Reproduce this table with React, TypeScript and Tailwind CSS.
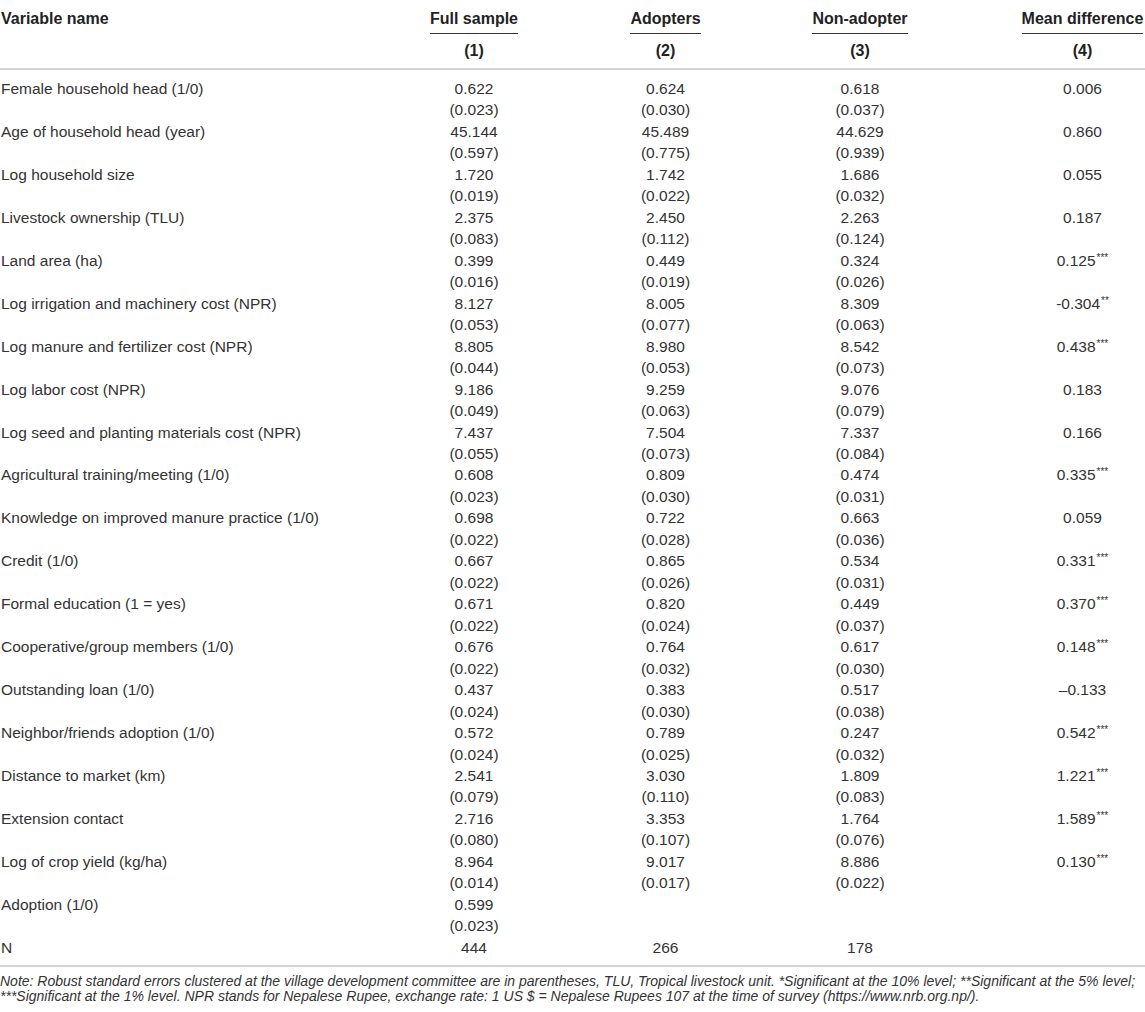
const rows: [string, string[], string[], string, string?][] = [
  ["Female household head (1/0)", ["0.622", "0.624", "0.618"], ["(0.023)", "(0.030)", "(0.037)"], "0.006"],
  ["Age of household head (year)", ["45.144", "45.489", "44.629"], ["(0.597)", "(0.775)", "(0.939)"], "0.860"],
  ["Log household size", ["1.720", "1.742", "1.686"], ["(0.019)", "(0.022)", "(0.032)"], "0.055"],
  ["Livestock ownership (TLU)", ["2.375", "2.450", "2.263"], ["(0.083)", "(0.112)", "(0.124)"], "0.187"],
  ["Land area (ha)", ["0.399", "0.449", "0.324"], ["(0.016)", "(0.019)", "(0.026)"], "0.125", "***"],
  ["Log irrigation and machinery cost (NPR)", ["8.127", "8.005", "8.309"], ["(0.053)", "(0.077)", "(0.063)"], "-0.304", "**"],
  ["Log manure and fertilizer cost (NPR)", ["8.805", "8.980", "8.542"], ["(0.044)", "(0.053)", "(0.073)"], "0.438", "***"],
  ["Log labor cost (NPR)", ["9.186", "9.259", "9.076"], ["(0.049)", "(0.063)", "(0.079)"], "0.183"],
  ["Log seed and planting materials cost (NPR)", ["7.437", "7.504", "7.337"], ["(0.055)", "(0.073)", "(0.084)"], "0.166"],
  ["Agricultural training/meeting (1/0)", ["0.608", "0.809", "0.474"], ["(0.023)", "(0.030)", "(0.031)"], "0.335", "***"],
  ["Knowledge on improved manure practice (1/0)", ["0.698", "0.722", "0.663"], ["(0.022)", "(0.028)", "(0.036)"], "0.059"],
  ["Credit (1/0)", ["0.667", "0.865", "0.534"], ["(0.022)", "(0.026)", "(0.031)"], "0.331", "***"],
  ["Formal education (1 = yes)", ["0.671", "0.820", "0.449"], ["(0.022)", "(0.024)", "(0.037)"], "0.370", "***"],
  ["Cooperative/group members (1/0)", ["0.676", "0.764", "0.617"], ["(0.022)", "(0.032)", "(0.030)"], "0.148", "***"],
  ["Outstanding loan (1/0)", ["0.437", "0.383", "0.517"], ["(0.024)", "(0.030)", "(0.038)"], "\u20130.133"],
  ["Neighbor/friends adoption (1/0)", ["0.572", "0.789", "0.247"], ["(0.024)", "(0.025)", "(0.032)"], "0.542", "***"],
  ["Distance to market (km)", ["2.541", "3.030", "1.809"], ["(0.079)", "(0.110)", "(0.083)"], "1.221", "***"],
  ["Extension contact", ["2.716", "3.353", "1.764"], ["(0.080)", "(0.107)", "(0.076)"], "1.589", "***"],
  ["Log of crop yield (kg/ha)", ["8.964", "9.017", "8.886"], ["(0.014)", "(0.017)", "(0.022)"], "0.130", "***"],
  ["Adoption (1/0)", ["0.599", "", ""], ["(0.023)", "", ""], ""],
];

const heads = [
  ["Full sample", "(1)"],
  ["Adopters", "(2)"],
  ["Non-adopter", "(3)"],
  ["Mean difference", "(4)"],
];

const grid = "grid grid-cols-[379px_190px_193px_196px_187px]";

function Line({ cells, last }: { cells: string[]; last?: [string, string?] }) {
  return (
    <div className={grid}>
      <div className="pl-px whitespace-nowrap">{cells[0]}</div>
      <div className="text-center">{cells[1]}</div>
      <div className="text-center">{cells[2]}</div>
      <div className="text-center">{cells[3]}</div>
      <div className="pl-[62px] text-center whitespace-nowrap">
        {last?.[0]}
        {last?.[1] && <sup className="text-[10px] ml-px">{last[1]}</sup>}
      </div>
    </div>
  );
}

export default function App() {
  return (
    <div
      className="w-[1145px] bg-white text-[#333]"
      style={{ fontFamily: '"Liberation Sans", Arial, sans-serif' }}
    >
      {/* header */}
      <div className="pt-[8px] pb-[7px] border-b-2 border-[#d4d4d4] font-bold text-[16px] leading-[21.5px] text-[#222]">
        <div className={grid}>
          <div className="pl-px">Variable name</div>
          {heads.map(([t, n], i) => (
            <div key={t} className={`flex flex-col items-center ${i === 3 ? "pl-[62px]" : ""}`}>
              <span className="inline-block border-b border-[#333] pb-[3px] whitespace-nowrap">{t}</span>
              <span className="mt-[6px]">{n}</span>
            </div>
          ))}
        </div>
      </div>

      {/* body */}
      <div className="pt-[8px] pb-[7px] border-b-2 border-[#d4d4d4] text-[15.5px] leading-[21.475px]">
        {rows.map(([label, vals, ses, diff, stars]) => (
          <div key={label}>
            <Line cells={[label, ...vals]} last={[diff, stars]} />
            <Line cells={["", ...ses]} />
          </div>
        ))}
        <Line cells={["N", "444", "266", "178"]} />
      </div>

      {/* note */}
      <div className="pt-[7px] italic text-[14px] leading-[15px] text-[#333]">
        <div className="whitespace-nowrap">
          Note: Robust standard errors clustered at the village development committee are in parentheses, TLU, Tropical livestock unit. *Significant at the 10% level; **Significant at the 5% level;
        </div>
        <div className="whitespace-nowrap">
          ***Significant at the 1% level. NPR stands for Nepalese Rupee, exchange rate: 1 US $ = Nepalese Rupees 107 at the time of survey (https://www.nrb.org.np/).
        </div>
      </div>
    </div>
  );
}
